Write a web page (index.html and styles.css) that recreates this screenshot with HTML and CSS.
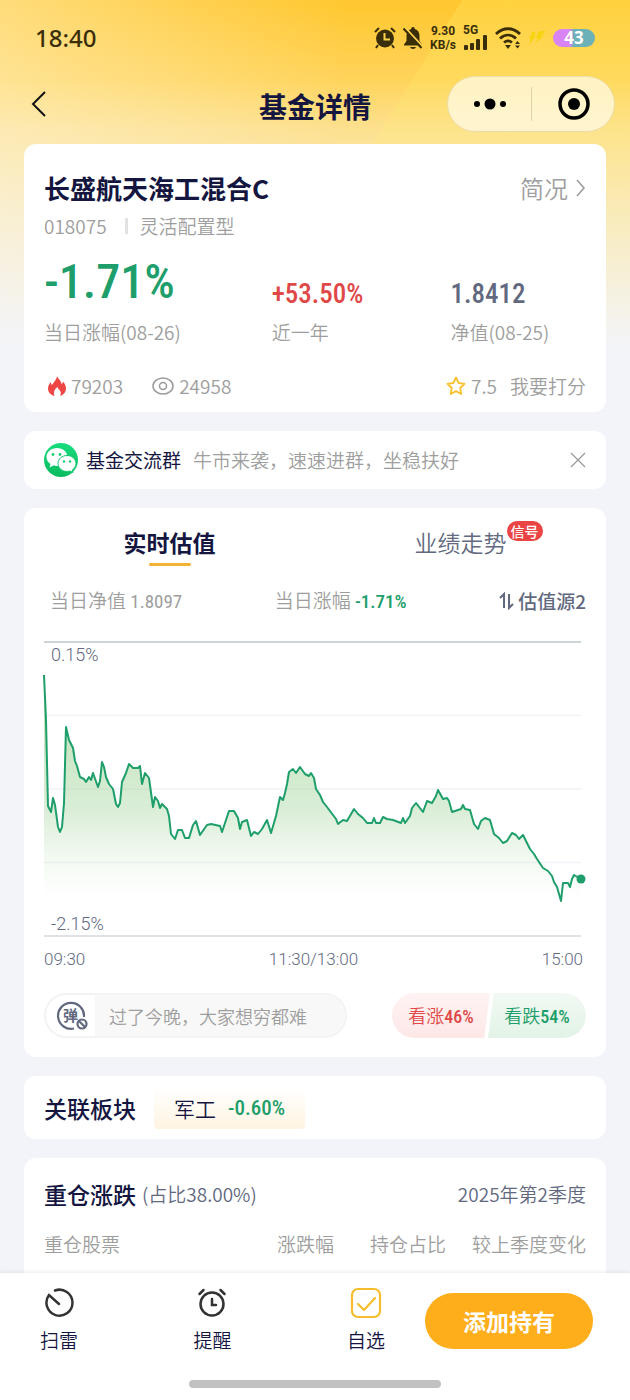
FILE: index.html
```html
<!DOCTYPE html>
<html lang="zh-CN">
<head>
    <meta charset="UTF-8">
    <meta name="viewport" content="width=device-width, initial-scale=1.0">
    <title>基金详情</title>
    <link rel="stylesheet" href="styles.css">
</head>
<body>
    <div class="status-bar">
        <span class="clock">18:40</span>
        <div class="status-icons">
            <svg width="22" height="22" viewBox="0 0 22 22">
                <circle cx="11" cy="11.500" r="9" fill="#3a2e08"/>
                <path d="M1 5l4-4M21 5l-4-4M4 18l-2 3M18 18l2 3" stroke="#3a2e08" stroke-width="2"/>
                <path d="M10.500 6v6.500H16" fill="none" stroke="#ffd24d" stroke-width="2"/>
            </svg>
            <svg width="20" height="22" viewBox="0 0 20 22">
                <path d="M10 0c1.200 0 1.800.8 1.800 2 3.200.8 4.700 3.300 4.700 7v5l2.500 3.500v1H1v-1L3.500 14V9c0-3.700 1.500-6.200 4.700-7 0-1.200.6-2 1.800-2zM7 20h6c-.5 1.300-1.500 2-3 2s-2.500-.7-3-2z" fill="#3a2e08"/>
                <path d="M2 .5L20 20" stroke="#ffd24d" stroke-width="2"/>
                <path d="M.5 1.500L18.500 21" stroke="#3a2e08" stroke-width="2"/>
            </svg>
            <span class="speed"><span>9.30</span><span>KB/s</span></span>
            <span class="signal">
                <span>5G</span>
                <svg width="25" height="16" viewBox="0 0 25 16" fill="#3a2e08">
                    <rect x="1" y="11" width="4" height="5" rx="1"/>
                    <rect x="7" y="9" width="4" height="7" rx="1"/>
                    <rect x="13" y="5" width="4" height="11" rx="1"/>
                    <rect x="20" y="1" width="4" height="15" rx="1"/>
                </svg>
            </span>
            <svg width="26" height="22" viewBox="0 0 26 22">
                <path d="M1 7c7-7 17-7 24 0M5 11.500c5-4.500 11-4.500 16 0M9 15.500c2.500-2 5.500-2 8 0" fill="none" stroke="#3a2e08" stroke-width="2.800"/>
                <path d="M10 18h6l-3 4zM20 17l2.500-3 2.500 3zM20 18.500l2.500 3 2.500-3z" fill="#3a2e08"/>
            </svg>
            <svg width="18" height="18" viewBox="0 0 18 18" fill="#f6d510">
                <path d="M4 3h4L6 7h2l-7 9 2-6H1zM11 2h7l-5 5h3l-9 7 3-5H8z"/>
            </svg>
            <span class="battery">43</span>
        </div>
    </div>

    <header class="nav">
        <button class="back" aria-label="返回">
            <svg width="18" height="28" viewBox="0 0 18 28"><path d="M15 2L3 14l12 12" fill="none" stroke="#111" stroke-width="2"/></svg>
        </button>
        <h1>基金详情</h1>
        <div class="capsule">
            <button aria-label="更多">
                <svg width="34" height="12" viewBox="0 0 34 12"><circle cx="4" cy="6" r="3"/><circle cx="17" cy="6" r="5.500"/><circle cx="30" cy="6" r="3"/></svg>
            </button>
            <button aria-label="关闭小程序">
                <svg width="32" height="32" viewBox="0 0 32 32"><circle cx="16" cy="16" r="14" fill="none" stroke="#000" stroke-width="3.500"/><circle cx="16" cy="16" r="6"/></svg>
            </button>
        </div>
    </header>

    <main>
        <!-- Fund summary -->
        <section class="card summary">
            <div class="summary-head">
                <h2>长盛航天海工混合C</h2>
                <a href="#">简况
                    <svg width="10" height="18" viewBox="0 0 10 18"><path d="M1 1l7 8-7 8" fill="none" stroke="#999" stroke-width="1.500"/></svg>
                </a>
            </div>
            <div class="sub"><span>018075</span><i></i><span>灵活配置型</span></div>
            <div class="stats">
                <div><strong class="num big green">-1.71%</strong><span>当日涨幅(08-26)</span></div>
                <div><strong class="num red">+53.50%</strong><span>近一年</span></div>
                <div><strong class="num slate">1.8412</strong><span>净值(08-25)</span></div>
            </div>
            <div class="summary-foot">
                <svg width="18" height="20" viewBox="0 0 18 20">
                    <path d="M9 0c1 3 4 4 4.500 8 1-.4 1.400-1.300 1.500-2.500C17 8 18 10 18 12.500 18 16 15.500 19 12 20c1.500-2.500 1-4.500-1-6.500-.8-.8-1.300-1.500-1.500-2.500C7 13 5 15.500 6.500 20 2.500 19 0 16 0 12.500c0-2.700 1.200-4.500 3-6.500 0 1.500.3 2.200 1 3 1.500-3 4.500-5 5-9z" fill="#ee4545"/>
                </svg>
                <span class="heat">79203</span>
                <svg width="22" height="18" viewBox="0 0 22 18" fill="none" stroke="#999" stroke-width="1.500">
                    <ellipse cx="11" cy="9" rx="10" ry="8"/><circle cx="11" cy="9" r="3.500"/>
                </svg>
                <span class="views">24958</span>
                <svg width="20" height="20" viewBox="0 0 20 20"><path d="M10 1.500l2.600 5.500 6 .8-4.400 4.200 1.100 6L10 15.100 4.700 18l1.100-6L1.400 7.800l6-.8z" fill="none" stroke="#fbc02d" stroke-width="1.800" stroke-linejoin="round"/></svg>
                <span>7.5</span>
                <a href="#">我要打分</a>
            </div>
        </section>

        <!-- Chat group banner -->
        <section class="card banner">
            <svg width="34" height="34" viewBox="0 0 34 34">
                <defs><linearGradient id="wx" x2="0" y2="1"><stop stop-color="#18dc7d"/><stop offset="1" stop-color="#09bb5f"/></linearGradient></defs>
                <circle cx="17" cy="17" r="17" fill="url(#wx)"/>
                <path d="M13 5c-6 0-10.500 4-10.500 9 0 3 1.500 5.300 4 7l-1 3.500 4-2c1.200.3 2.300.5 3.500.5 6 0 10.500-4 10.500-9S19 5 13 5z" fill="#fff"/>
                <path d="M23 12.500c-5 0-9 3.500-9 8s4 8 9 8c1 0 2-.2 3-.5l3 1.500-.7-2.500c2.200-1.500 3.700-3.800 3.700-6.500 0-4.500-4-8-9-8z" fill="#fff" stroke="#0ecb6b"/>
                <g fill="#12cf70"><circle cx="9" cy="11.500" r="1.400"/><circle cx="16" cy="11.500" r="1.400"/><circle cx="20" cy="18.500" r="1.200"/><circle cx="26" cy="18.500" r="1.200"/></g>
            </svg>
            <strong>基金交流群</strong>
            <span>牛市来袭，速速进群，坐稳扶好</span>
            <button aria-label="关闭">
                <svg width="16" height="16" viewBox="0 0 16 16"><path d="M1 1l14 14M15 1L1 15" stroke="#999" stroke-width="1.200"/></svg>
            </button>
        </section>

        <!-- Valuation chart -->
        <section class="card valuation">
            <div class="tabs">
                <button class="tab active">实时估值</button>
                <button class="tab"><span class="tab-text">业绩走势<em>信号</em></span></button>
            </div>
            <div class="quote">
                <span>当日净值 <b class="num">1.8097</b></span>
                <span>当日涨幅 <b class="num green">-1.71%</b></span>
                <button class="source">
                    <svg width="15" height="18" viewBox="0 0 15 18"><path d="M1 6l4-4v14M10 2v14l4-4" fill="none" stroke="#62697f" stroke-width="2"/></svg>估值源2
                </button>
            </div>
            <svg class="chart" viewBox="0 0 542 296">
                <defs>
                    <linearGradient id="area" gradientUnits="userSpaceOnUse" x1="0" y1="34" x2="0" y2="258">
                        <stop offset="0" stop-color="#a5d79b" stop-opacity=".8"/>
                        <stop offset=".6" stop-color="#b4dcae" stop-opacity=".5"/>
                        <stop offset="1" stop-color="#d5edd2" stop-opacity="0"/>
                    </linearGradient>
                </defs>
                <path d="M0 1H537" stroke="#cdd4d8" stroke-width="2"/>
                <path d="M0 74.500H537M0 148H537M0 221.500H537" stroke="#f0f2f5" stroke-width="1.500"/>
                <path d="M0 295H537" stroke="#dfe3e8" stroke-width="2"/>
                <path class="area" d="M0 34L2 79 4 165 7 171 9 157 11 164 14 186 16 191 18 186 20 162 22 86 25 99 29 107 31 120 33 125 36 136 40 138 42 141 45 136 47 139 49 132 54 146 56 140 58 121 60 126 62 136 65 143 69 148 72 163 74 166 76 162 78 141 82 132 85 123 89 127 94 127 96 125 98 143 101 132 105 137 109 166 111 156 114 160 116 167 118 163 123 168 125 175 127 193 131 198 134 189 138 189 141 197 145 197 149 184 152 180 156 194 163 184 167 183 176 185 178 191 185 170 190 170 194 177 196 188 198 181 203 179 207 195 210 191 214 193 218 188 223 179 227 192 232 175 236 156 239 159 241 152 243 143 245 131 249 128 252 132 256 126 261 133 265 135 267 132 270 137 272 148 276 154 279 161 283 166 292 178 294 183 299 179 303 180 310 168 314 173 319 177 323 182 328 182 330 177 332 182 336 182 339 176 343 178 349 179 357 182 359 177 361 182 366 175 368 167 372 162 379 171 383 160 388 162 392 155 394 149 399 158 403 157 405 160 408 171 417 168 419 164 421 168 426 169 430 183 434 188 437 180 441 177 446 179 450 193 455 197 459 202 463 200 468 192 472 194 475 198 479 194 486 208 490 213 493 218 499 227 504 230 508 235 510 241 513 246 517 260 519 242 524 242 526 246 528 238 530 234 537 238V258H0z"/>
                <path class="line" d="M0 34L2 79 4 165 7 171 9 157 11 164 14 186 16 191 18 186 20 162 22 86 25 99 29 107 31 120 33 125 36 136 40 138 42 141 45 136 47 139 49 132 54 146 56 140 58 121 60 126 62 136 65 143 69 148 72 163 74 166 76 162 78 141 82 132 85 123 89 127 94 127 96 125 98 143 101 132 105 137 109 166 111 156 114 160 116 167 118 163 123 168 125 175 127 193 131 198 134 189 138 189 141 197 145 197 149 184 152 180 156 194 163 184 167 183 176 185 178 191 185 170 190 170 194 177 196 188 198 181 203 179 207 195 210 191 214 193 218 188 223 179 227 192 232 175 236 156 239 159 241 152 243 143 245 131 249 128 252 132 256 126 261 133 265 135 267 132 270 137 272 148 276 154 279 161 283 166 292 178 294 183 299 179 303 180 310 168 314 173 319 177 323 182 328 182 330 177 332 182 336 182 339 176 343 178 349 179 357 182 359 177 361 182 366 175 368 167 372 162 379 171 383 160 388 162 392 155 394 149 399 158 403 157 405 160 408 171 417 168 419 164 421 168 426 169 430 183 434 188 437 180 441 177 446 179 450 193 455 197 459 202 463 200 468 192 472 194 475 198 479 194 486 208 490 213 493 218 499 227 504 230 508 235 510 241 513 246 517 260 519 242 524 242 526 246 528 238 530 234 537 238"/>
                <circle cx="537" cy="238" r="4.500" fill="#1e9e6a"/>
                <text x="7" y="20">0.15%</text>
                <text x="7" y="289">-2.15%</text>
            </svg>
            <div class="axis"><span>09:30</span><span>11:30/13:00</span><span>15:00</span></div>
            <div class="interact">
                <div class="danmu">
                    <button aria-label="弹幕开关">
                        <svg width="32" height="30" viewBox="0 0 32 30" fill="none" stroke="#62697f" stroke-width="2.200">
                            <path d="M18 27.500A13 13 0 1 1 28 16"/>
                            <circle cx="26" cy="23" r="4.500"/>
                            <path d="M23 20l6 6"/>
                            <text x="7" y="20" font-size="15" font-weight="700" fill="#62697f" stroke="none">弹</text>
                        </svg>
                    </button>
                    <input type="text" aria-label="弹幕" placeholder="过了今晚，大家想穷都难">
                </div>
                <div class="vote">
                    <button class="up">看涨<b class="num">46%</b></button>
                    <button class="down">看跌<b class="num">54%</b></button>
                </div>
            </div>
        </section>

        <!-- Related sector -->
        <section class="card sector">
            <h3>关联板块</h3>
            <a href="#">军工<b class="num green">-0.60%</b></a>
        </section>

        <!-- Holdings -->
        <section class="card holdings">
            <div class="holdings-head">
                <h3>重仓涨跌</h3>
                <span>(占比38.00%)</span>
                <span class="quarter">2025年第2季度</span>
            </div>
            <table>
                <thead>
                    <tr><th>重仓股票</th><th>涨跌幅</th><th>持仓占比</th><th>较上季度变化</th></tr>
                </thead>
            </table>
        </section>
    </main>

    <footer class="bottom-bar">
        <div class="bar-row">
            <div class="actions">
                <button class="action">
                    <svg width="32" height="32" viewBox="0 0 32 32" fill="none" stroke="#333" stroke-width="2.500" stroke-linecap="round">
                        <path d="M12 3.500A13 13 0 1 1 6 8l10 9"/>
                    </svg>
                    扫雷
                </button>
                <button class="action">
                    <svg width="32" height="32" viewBox="0 0 32 32" fill="none" stroke="#333" stroke-width="2.500" stroke-linecap="round">
                        <circle cx="16" cy="17" r="11.500"/><path d="M16 12v6h4M3.500 7l4-4M28.500 7l-4-4"/>
                    </svg>
                    提醒
                </button>
                <button class="action">
                    <svg width="32" height="32" viewBox="0 0 32 32" fill="none" stroke="#f5bd2e" stroke-width="2.200" stroke-linecap="round" stroke-linejoin="round">
                        <rect x="2" y="2" width="28" height="28" rx="6"/><path d="M8 17l6 6 11-12"/>
                    </svg>
                    自选
                </button>
            </div>
            <button class="add">添加持有</button>
        </div>
        <div class="home-line"></div>
    </footer>
</body>
</html>
```

FILE: styles.css
```css
* {
    box-sizing: border-box;
}
body {
    margin: 0;
    height: 100vh;
    display: flex;
    flex-direction: column;
    font-family: "Noto Sans CJK SC", sans-serif;
    font-size: 19px;
    font-weight: 350;
    line-height: 28px;
    color: #9e9e9e;
    background: linear-gradient(to bottom, rgba(243, 244, 250, 0) 80px, #f3f4fa 350px),
                linear-gradient(to right, rgba(255, 246, 215, .45), rgba(255, 246, 215, 0) 55%),
                linear-gradient(122deg, rgba(255, 232, 100, 0) 392px, rgba(255, 232, 100, .3) 392px),
                linear-gradient(to bottom, #ffc72e, #ffdc78 130px, #ffe694 350px);
}
h1, h2, h3 {
    margin: 0;
    color: #14163f;
}
button {
    padding: 0;
    border: none;
    background: none;
    font: inherit;
    color: inherit;
    cursor: pointer;
}
a {
    color: inherit;
    text-decoration: none;
}
svg {
    display: block;
    flex: none;
}
.num {
    font-family: "Roboto Condensed", "Liberation Sans Narrow", "Noto Sans CJK SC", sans-serif;
    font-weight: 500;
}
.green { color: #1e9e6a; }
.red { color: #e04848; }
.slate { color: #62697f; }

/* status bar */
.status-bar {
    display: flex;
    justify-content: space-between;
    align-items: center;
    height: 76px;
    padding: 0 35px;
    color: #3a2e08;
}
.clock {
    font-family: "Noto Sans", sans-serif;
    font-size: 24px;
    font-weight: 500;
}
.status-icons {
    display: flex;
    align-items: center;
    gap: 7px;
}
.speed, .signal {
    font-family: Roboto, sans-serif;
    font-size: 12px;
    font-weight: 700;
    line-height: 14px;
    text-align: center;
}
.speed span {
    display: block;
}
.signal {
    text-align: left;
}
.signal span {
    display: block;
    height: 8px;
    line-height: 8px;
}
.battery {
    width: 42px;
    height: 18px;
    border-radius: 9px;
    background: linear-gradient(to right, #d884f5 40%, #6cb0b8 50%);
    color: #fff;
    font-family: "Noto Sans", sans-serif;
    font-size: 17px;
    font-weight: 700;
    line-height: 18px;
    text-align: center;
}

/* title bar */
.nav {
    display: grid;
    grid-template-columns: 1fr auto 1fr;
    align-items: center;
    padding: 0 15px 12px;
}
.nav h1 {
    padding-top: 3px;
    font-size: 28px;
    font-weight: 700;
}
.back {
    justify-self: start;
    padding: 0 15px;
}
.capsule {
    justify-self: end;
    display: flex;
    width: 168px;
    height: 56px;
    border: 1px solid #ecdca6;
    border-radius: 28px;
    background: rgba(255, 250, 230, .75);
}
.capsule button {
    flex: 1;
    display: flex;
    justify-content: center;
    align-items: center;
}
.capsule button + button::before {
    content: "";
    height: 34px;
    border-left: 1px solid #ddd2aa;
    margin-right: 26px;
}
.capsule button + button {
    justify-content: flex-start;
}

main {
    flex: 1;
    min-height: 0;
    overflow: auto;
    scrollbar-width: none;
    padding: 0 24px;
}
.card {
    margin-bottom: 19px;
    padding: 0 20px;
    border-radius: 12px;
    background: #fff;
}

/* summary */
.summary {
    padding-top: 24px;
    padding-bottom: 12px;
}
.summary-head {
    display: flex;
    justify-content: space-between;
    align-items: center;
    line-height: 40px;
}
.summary-head h2 {
    font-size: 26px;
    font-weight: 700;
}
.summary-head a {
    display: flex;
    align-items: center;
    gap: 8px;
    font-size: 24px;
}
.sub {
    display: flex;
    align-items: center;
    margin-top: 4px;
}
.sub i {
    width: 3px;
    height: 16px;
    margin: 0 12px 0 18px;
    background: #e2e2e2;
}
.stats {
    display: grid;
    grid-template-columns: 42% 33% 25%;
    align-items: end;
    margin-top: 14px;
}
.stats .num {
    display: block;
    margin-bottom: 8px;
    font-size: 27px;
    line-height: 32px;
}
.stats .big {
    font-size: 48px;
    line-height: 56px;
}
.summary-foot {
    display: flex;
    align-items: center;
    gap: 5px;
    margin-top: 26px;
    padding-left: 4px;
}
.heat {
    margin-right: 24px;
}
.views {
    margin-right: auto;
}
.summary-foot a {
    margin-left: 8px;
}

/* banner */
.banner {
    display: flex;
    align-items: center;
    height: 58px;
}
.banner strong {
    margin: 0 12px 0 8px;
    font-weight: 400;
    color: #14163f;
}
.banner button {
    margin-left: auto;
}

/* valuation */
.valuation {
    padding-top: 16px;
    padding-bottom: 19px;
}
.tabs {
    display: grid;
    grid-template-columns: 1fr 1fr;
    margin: 0 -20px;
}
.tab {
    font-size: 23px;
    line-height: 36px;
    color: #62697f;
}
.tab::after {
    content: "";
    display: block;
    width: 42px;
    height: 3px;
    margin: 3px auto 0;
}
.tab.active {
    font-weight: 700;
    color: #14163f;
}
.tab.active::after {
    border-radius: 2px;
    background: #f3b233;
}
.tab-text {
    position: relative;
}
.tab em {
    position: absolute;
    left: 100%;
    top: -4px;
    width: 36px;
    border-radius: 10px;
    background: #ea4444;
    color: #fff;
    font-size: 14px;
    font-style: normal;
    font-weight: 500;
    line-height: 20px;
}
.quote {
    display: flex;
    justify-content: space-between;
    margin-top: 20px;
    padding-left: 6px;
}
.quote .num:not(.green) {
    font-weight: 400;
}
.source {
    display: flex;
    align-items: center;
    gap: 4px;
    color: #62697f;
    font-weight: 500;
}
.chart {
    width: 100%;
    height: auto;
    margin-top: 25px;
    overflow: visible;
}
.chart .area {
    fill: url(#area);
}
.chart .line {
    fill: none;
    stroke: #1e9e6a;
    stroke-width: 2;
    stroke-linejoin: round;
}
.chart text:not([stroke]) {
    font-family: Roboto, sans-serif;
    font-size: 18px;
    font-weight: 300;
    fill: #62697f;
}
.axis {
    display: flex;
    justify-content: space-between;
    margin-top: 10px;
    padding-right: 3px;
    font-family: Roboto, sans-serif;
    font-size: 17px;
    font-weight: 300;
    line-height: 24px;
    color: #62697f;
}
.interact {
    display: flex;
    justify-content: space-between;
    margin-top: 22px;
}
.danmu {
    display: flex;
    width: 303px;
    height: 45px;
    border: 2px solid #f3f3f3;
    border-radius: 23px;
    overflow: hidden;
}
.danmu button {
    padding: 0 7px 0 10px;
}
.danmu input {
    flex: 1;
    min-width: 0;
    padding: 0 14px;
    border: none;
    background: #f8f8f8;
    font: inherit;
    font-size: 18px;
}
.danmu input::placeholder {
    color: #9e9e9e;
}
.vote {
    display: flex;
    width: 194px;
    font-size: 18px;
}
.vote button {
    flex: 1;
}
.up {
    border-radius: 23px 0 0 23px;
    background: linear-gradient(to bottom, #fff3f3, #fde7e7);
    color: #e04848;
    clip-path: polygon(0 0, 100% 0, 94% 100%, 0 100%);
}
.vote .down {
    margin-left: -2px;
    border-radius: 0 23px 23px 0;
    background: linear-gradient(to bottom, #f1f9f3, #e3f3e7);
    color: #1e9e6a;
    clip-path: polygon(6% 0, 100% 0, 100% 100%, 0 100%);
}

/* sector */
.sector {
    display: flex;
    align-items: center;
    gap: 18px;
    height: 63px;
}
h3 {
    font-size: 23px;
    font-weight: 500;
}
.sector a {
    display: flex;
    gap: 12px;
    padding: 0 20px;
    border-radius: 4px;
    background: linear-gradient(to bottom, #fff, #fff4e2);
    color: #14163f;
    font-size: 21px;
    line-height: 42px;
}

/* holdings */
.holdings {
    padding-top: 22px;
    padding-bottom: 40px;
    margin-bottom: 0;
}
.holdings-head {
    display: flex;
    align-items: center;
    gap: 6px;
    color: #62697f;
}
.quarter {
    margin-left: auto;
}
.holdings table {
    width: 100%;
    margin-top: 22px;
    border-collapse: collapse;
}
.holdings th {
    width: 1%;
    padding: 0 0 0 36px;
    font-weight: 350;
    text-align: right;
    white-space: nowrap;
}
.holdings th:first-child {
    width: auto;
    padding: 0;
    text-align: left;
}
.holdings th:last-child {
    padding-left: 26px;
}

/* bottom bar */
.bottom-bar {
    position: relative;
    padding-bottom: 12px;
    background: #fff;
    box-shadow: 0 -1px 4px rgba(0, 0, 0, .08);
}
.bar-row {
    display: flex;
    align-items: center;
    gap: 40px;
    padding: 14px 37px 26px 40px;
}
.actions {
    flex: 1;
    display: flex;
    justify-content: space-between;
}
.action {
    display: flex;
    flex-direction: column;
    align-items: center;
    gap: 7px;
    color: #14163f;
}
.add {
    width: 168px;
    height: 56px;
    border-radius: 28px;
    background: #fdae1a;
    color: #fff;
    font-size: 23px;
    font-weight: 700;
}
.home-line {
    width: 40%;
    height: 8px;
    margin: 0 auto;
    border-radius: 4px;
    background: #c1c1c1;
}
```
